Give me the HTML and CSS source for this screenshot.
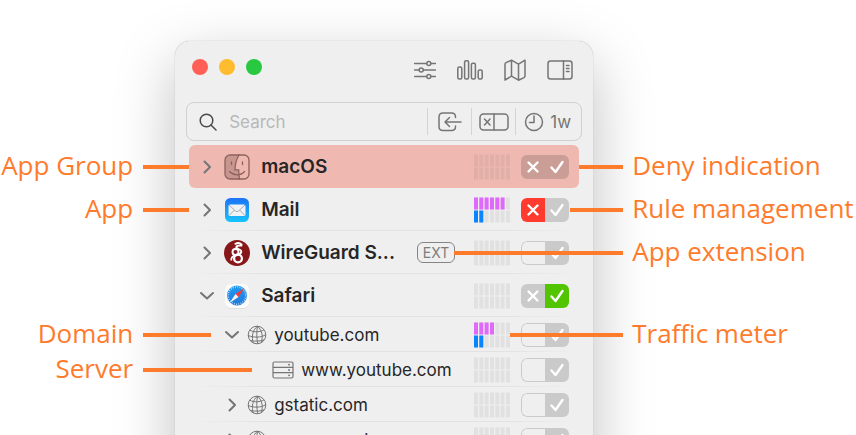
FILE: index.html
```html
<!DOCTYPE html>
<html lang="en">
<head>
    <meta charset="UTF-8">
    <meta name="viewport" content="width=device-width, initial-scale=1.0">
    <title>Network Monitor</title>
    <link rel="stylesheet" href="styles.css">
</head>
<body>
    <!-- Shared icons -->
    <svg class="sprite" aria-hidden="true">
        <symbol id="right" viewBox="0 0 16 16"><path d="M5.500 2.500l5.500 5.500-5.500 5.500"/></symbol>
        <symbol id="down" viewBox="0 0 16 16"><path d="M2 5l6 5.500L14 5"/></symbol>
        <symbol id="cross" viewBox="0 0 24 24"><path d="M7.500 7.500l9 9M16.500 7.500l-9 9"/></symbol>
        <symbol id="check" viewBox="0 0 24 24"><path d="M6.500 12.500l4 4.500L17.500 7"/></symbol>
        <symbol id="globe" viewBox="0 0 20 20">
            <circle cx="10" cy="10" r="8.800"/>
            <path d="M10.500 1.200C5.500 5 4.300 12 6.300 18M10.500 1.200c-1 5-1 12 .3 17.500M10.500 1.200c4.700 4 6 11 3.500 16.300M2.700 5.200c4.500 2.300 10.500 2 14.300-.4M1.200 10.500c5.500 2.300 12.500 2.300 17.500-.8M3.300 15.500c4.200 1 9.700.8 13.700-.6"/>
        </symbol>
        <symbol id="meter" viewBox="0 0 36 26">
            <path d="M2 .5v12M7.300 .5v12M12.600 .5v12M18 .5v12M23.300 .5v12M28.600 .5v12M34 .5v12M2 13.500v12M7.300 13.500v12M12.600 13.500v12M18 13.500v12M23.300 13.500v12M28.600 13.500v12M34 13.500v12"/>
        </symbol>
    </svg>

    <main class="stage">
        <section class="window">
            <header class="toolbar">
                <button class="light red" aria-label="Close"></button>
                <button class="light yellow" aria-label="Minimize"></button>
                <button class="light green" aria-label="Zoom"></button>
                <div class="tools">
                    <button class="tool" aria-label="Filters">
                        <svg viewBox="0 0 22 22"><path d="M.5 4.500h12M17 4.500h4.500M.5 11H5M9.500 11h12M.5 17.500h12M17 17.500h4.500"/><circle cx="14.800" cy="4.500" r="2"/><circle cx="7.200" cy="11" r="2"/><circle cx="14.800" cy="17.500" r="2"/></svg>
                    </button>
                    <button class="tool" aria-label="Statistics">
                        <svg class="wide" viewBox="0 0 26 22"><rect x=".8" y="8" width="4" height="12" rx="1.500"/><rect x="7.600" y="1.800" width="4" height="18.200" rx="1.500"/><rect x="14.400" y="4.300" width="4" height="15.700" rx="1.500"/><rect x="21.200" y="11" width="4" height="9" rx="1.500"/></svg>
                    </button>
                    <button class="tool" aria-label="Map">
                        <svg viewBox="0 0 22 22"><path d="M1 5.200q0-1 1-1.600l5.500-2.400v16L1 21zM7.500 1.200l7 4v16l-7-4M14.500 5.200l6.500-4V17q0 1-1 1.600l-5.500 2.600"/></svg>
                    </button>
                    <button class="tool" aria-label="Sidebar">
                        <svg class="wide" viewBox="0 0 26 22"><rect x="1" y="2" width="24" height="18" rx="2.500"/><path d="M16.500 2v18M19.500 6.500h2.500M19.500 9.500h2.500M19.500 12.500h2.500"/></svg>
                    </button>
                </div>
            </header>

            <div class="search">
                <svg class="lens" viewBox="0 0 18 18"><circle cx="7.500" cy="7.500" r="6.300"/><path d="M12 12l5 5"/></svg>
                <input type="text" placeholder="Search" aria-label="Search">
                <button class="filter" aria-label="Incoming">
                    <svg class="icon-in" viewBox="0 0 24 20"><path d="M17.500 5.500V5c0-2.500-1.500-4-4-4H5C2.500 1 1 2.500 1 5v9.500c0 2.500 1.500 4 4 4h8.500c2.500 0 4-1.500 4-4V14M23 10H7M11.500 5.500L7 10l4.500 4.500"/></svg>
                </button>
                <button class="filter" aria-label="Denied">
                    <svg class="icon-deny" viewBox="0 0 30 18"><rect x="1" y="1" width="28" height="16" rx="3.500"/><path d="M15 1v16M5.500 6l5.500 6M11 6l-5.500 6"/></svg>
                </button>
                <button class="filter period">
                    <svg class="icon-clock" viewBox="0 0 20 20"><circle cx="10" cy="10" r="8.500"/><path d="M10 4v6.500H5.500"/></svg>1w
                </button>
            </div>

            <ul class="list">
                <li class="row denied">
                    <button class="arrow" aria-label="Expand"><svg><use href="#right"/></svg></button>
                    <svg class="app-icon" viewBox="0 0 26 26">
                        <path d="M15 1H6a5 5 0 0 0-5 5v14a5 5 0 0 0 5 5h9.500c-.6-3-.8-5-.8-8H11c0-6 1-11 4-16z" fill="#c9958f"/>
                        <rect x="1" y="1" width="24" height="24" rx="5" fill="none" stroke="#8d625e" stroke-width="1.300"/>
                        <path d="M15 1c-3 5-4 10-4 15h3.700c0 4 .2 6 .8 9M7.500 8v2.500M18.500 8v2.500M5.500 17.500c4.500 4.500 11 4.500 15 0" fill="none" stroke="#8d625e" stroke-width="1.300" stroke-linecap="round"/>
                    </svg>
                    <span class="name">macOS</span>
                    <svg class="meter"><use href="#meter"/></svg>
                    <div class="rule"><button aria-label="Deny"><svg><use href="#cross"/></svg></button><button aria-label="Allow"><svg><use href="#check"/></svg></button></div>
                    <span class="callout before">App Group</span>
                    <span class="callout after">Deny indication</span>
                </li>
                <li class="row">
                    <button class="arrow" aria-label="Expand"><svg><use href="#right"/></svg></button>
                    <svg class="app-icon" viewBox="0 0 26 26">
                        <defs><linearGradient id="mail" x2="0" y2="1"><stop stop-color="#1d72f6"/><stop offset="1" stop-color="#17c5fb"/></linearGradient></defs>
                        <rect x="1" y="1" width="24" height="24" rx="5.500" fill="url(#mail)"/>
                        <rect x="4.500" y="7.500" width="17" height="11.500" rx="1.500" fill="#f0f2f4"/>
                        <path d="M5 8l6.500 6q1.500 1.300 3 0L21 8M5 18.500l5.500-5.500M21 18.500L15.500 13" fill="none" stroke="#98a3ac" stroke-width=".9"/>
                    </svg>
                    <span class="name">Mail</span>
                    <svg class="meter" viewBox="0 0 36 26"><use href="#meter" width="36" height="26"/><path class="out" d="M2 .5v12M7.300 .5v12M12.600 .5v12M18 .5v12M23.300 .5v12M28.600 .5v12"/><path class="in" d="M2 13.500v12M7.300 13.500v12"/></svg>
                    <div class="rule"><button class="deny" aria-label="Deny"><svg><use href="#cross"/></svg></button><button aria-label="Allow"><svg><use href="#check"/></svg></button></div>
                    <span class="callout before">App</span>
                    <span class="callout after to-rule">Rule management</span>
                </li>
                <li class="row">
                    <button class="arrow" aria-label="Expand"><svg><use href="#right"/></svg></button>
                    <svg class="app-icon" viewBox="0 0 26 26">
                        <circle cx="13" cy="13" r="13" fill="#88171a"/>
                        <path d="M11.500 3.800c2.500-1.300 4.500-.8 6 .7M17.500 5.500c-2.500.2-5-.3-5.200 1.700s5 1.800 5 4.300-2.500 3-5 3.800" fill="none" stroke="#fff" stroke-width="2" stroke-linecap="round"/>
                        <circle cx="11.500" cy="12" r="3" fill="none" stroke="#fff" stroke-width="1.900"/>
                        <circle cx="14" cy="18.500" r="3.900" fill="none" stroke="#fff" stroke-width="2.300"/>
                        <path d="M7.200 20.500c-.2-3 1.500-4.500 4-5.500" fill="none" stroke="#fff" stroke-width="1.800"/>
                    </svg>
                    <span class="name">WireGuard S...</span>
                    <span class="ext">EXT</span>
                    <svg class="meter"><use href="#meter"/></svg>
                    <div class="rule"><button class="off" aria-label="Deny"></button><button aria-label="Allow"><svg><use href="#check"/></svg></button></div>
                    <span class="callout after to-ext">App extension</span>
                </li>
                <li class="row">
                    <button class="arrow" aria-label="Collapse"><svg><use href="#down"/></svg></button>
                    <svg class="app-icon" viewBox="0 0 26 26">
                        <defs><linearGradient id="safari" x2="0" y2="1"><stop stop-color="#1f9cf4"/><stop offset="1" stop-color="#2278d8"/></linearGradient></defs>
                        <rect x="1" y="1.500" width="24" height="24" rx="5.500" fill="#cfcfcf"/>
                        <rect x="1" y="1" width="24" height="24" rx="5.500" fill="#fbfbfb"/>
                        <circle cx="13" cy="12.500" r="10" fill="url(#safari)"/>
                        <circle cx="13" cy="12.500" r="8.700" fill="none" stroke="#d6ebff" stroke-width="1.500" stroke-dasharray=".8 1.480"/>
                        <path d="M20.500 5l-6 9-3-3z" fill="#f23b36"/>
                        <path d="M5.500 20l6-9 3 3z" fill="#f4f4f4"/>
                    </svg>
                    <span class="name">Safari</span>
                    <svg class="meter"><use href="#meter"/></svg>
                    <div class="rule"><button aria-label="Deny"><svg><use href="#cross"/></svg></button><button class="allow" aria-label="Allow"><svg><use href="#check"/></svg></button></div>
                </li>
                <li class="row domain">
                    <button class="arrow" aria-label="Collapse"><svg><use href="#down"/></svg></button>
                    <svg class="globe"><use href="#globe"/></svg>
                    <span class="name">youtube.com</span>
                    <svg class="meter" viewBox="0 0 36 26"><use href="#meter" width="36" height="26"/><path class="out" d="M2 .5v12M7.300 .5v12M12.600 .5v12M18 .5v12"/><path class="in" d="M2 13.500v12M7.300 13.500v12"/></svg>
                    <div class="rule"><button class="off" aria-label="Deny"></button><button aria-label="Allow"><svg><use href="#check"/></svg></button></div>
                    <span class="callout before to-domain">Domain</span>
                    <span class="callout after to-meter">Traffic meter</span>
                </li>
                <li class="row server">
                    <svg class="server-icon" viewBox="0 0 22 18"><rect x="1" y="1" width="20" height="16" rx="1.500"/><path d="M1 6.300h20M1 11.600h20"/><path class="dots" d="M17 3.700h.1M17 9h.1M17 14.300h.1"/></svg>
                    <span class="name">www.youtube.com</span>
                    <svg class="meter"><use href="#meter"/></svg>
                    <div class="rule"><button class="off" aria-label="Deny"></button><button aria-label="Allow"><svg><use href="#check"/></svg></button></div>
                    <span class="callout before to-server">Server</span>
                </li>
                <li class="row domain">
                    <button class="arrow" aria-label="Expand"><svg><use href="#right"/></svg></button>
                    <svg class="globe"><use href="#globe"/></svg>
                    <span class="name">gstatic.com</span>
                    <svg class="meter"><use href="#meter"/></svg>
                    <div class="rule"><button class="off" aria-label="Deny"></button><button aria-label="Allow"><svg><use href="#check"/></svg></button></div>
                </li>
                <li class="row domain">
                    <button class="arrow" aria-label="Expand"><svg><use href="#right"/></svg></button>
                    <svg class="globe"><use href="#globe"/></svg>
                    <span class="name">maps.google.com</span>
                    <svg class="meter"><use href="#meter"/></svg>
                    <div class="rule"><button class="off" aria-label="Deny"></button><button aria-label="Allow"><svg><use href="#check"/></svg></button></div>
                </li>
            </ul>
        </section>
    </main>
</body>
</html>
```
FILE: styles.css
```css
* {
    margin: 0;
    padding: 0;
    box-sizing: border-box;
}

body {
    height: 100vh;
    overflow: hidden;
    background: #fff;
    font-family: Inter, sans-serif;
    color: #262626;
}

button {
    background: none;
    border: none;
    font: inherit;
    color: inherit;
}

svg {
    display: block;
    flex: none;
}

.sprite {
    position: absolute;
    width: 0;
    height: 0;
}

.stage {
    display: grid;
    grid-template-columns: 2fr minmax(0, 418px) 3fr;
    padding-top: 41px;
}

.window {
    grid-column: 2;
    min-height: 480px;
    padding: 0 11px;
    background: #efefef;
    border-radius: 15px;
    box-shadow: 0 0 1px rgba(0,0,0,0.35), 0 20px 60px rgba(0,0,0,0.25);
}

/* Toolbar */
.toolbar {
    display: flex;
    align-items: flex-start;
    gap: 11px;
    height: 61px;
    padding: 18px 9px 0 6px;
}

.light {
    width: 16px;
    height: 16px;
    border-radius: 50%;
}

.red { background: #ff5f57; }
.yellow { background: #febc2e; }
.green { background: #28c840; }

.tools {
    display: flex;
    gap: 21px;
    margin-left: auto;
}

.tool svg {
    width: 22px;
    height: 22px;
    fill: none;
    stroke: #757575;
    stroke-width: 1.5;
    stroke-linecap: round;
    stroke-linejoin: round;
}

.tool .wide {
    width: 26px;
}

/* Search field */
.search {
    display: flex;
    align-items: center;
    height: 39px;
    padding-left: 12px;
    border: 1px solid #d0d0d0;
    border-radius: 8px;
}

.search svg {
    fill: none;
    stroke: #757575;
    stroke-width: 1.5;
    stroke-linecap: round;
    stroke-linejoin: round;
}

.search .lens {
    width: 18px;
    height: 18px;
    stroke: #4a4a4a;
}

.search input {
    flex: 1;
    min-width: 0;
    margin-left: 12px;
    border: none;
    outline: none;
    background: none;
    font: 17px Inter, sans-serif;
}

.search input::placeholder {
    color: #b8b8b8;
}

.filter {
    display: flex;
    align-items: center;
    justify-content: center;
    width: 44px;
    height: 27px;
    border-left: 1px solid #d4d4d4;
}

.period {
    gap: 6px;
    width: 66px;
    padding-right: 2px;
    font-size: 17px;
    color: #757575;
}

.icon-in {
    width: 24px;
    height: 20px;
}

.icon-deny {
    width: 30px;
    height: 18px;
}

.icon-clock {
    width: 20px;
    height: 20px;
}

/* List */
.list {
    margin: 4px 3px 0;
    list-style: none;
}

.row {
    position: relative;
    display: flex;
    align-items: center;
    height: 43px;
    padding: 0 10px;
    background: linear-gradient(90deg, transparent, #e2e2e2 20%, #e2e2e2 80%, transparent) bottom / 100% 1px no-repeat;
}

.denied {
    background: #efb9b2;
    border-radius: 6px;
}

.arrow svg {
    width: 16px;
    height: 16px;
    fill: none;
    stroke: #757575;
    stroke-width: 2;
    stroke-linecap: round;
    stroke-linejoin: round;
}

.app-icon {
    width: 26px;
    height: 26px;
    margin: 0 11px 0 9px;
}

.name {
    flex: 1;
    font-size: 19px;
    font-weight: 600;
    white-space: nowrap;
}

.ext {
    margin-right: 19px;
    padding: 0 5px;
    border: 1px solid #858585;
    border-radius: 6px;
    font-size: 14px;
    line-height: 19px;
    color: #7d7d7d;
}

.meter {
    width: 36px;
    height: 26px;
    margin-right: 11px;
    fill: none;
    stroke: #e1e1e1;
    stroke-width: 4;
}

.denied .meter {
    stroke: #e2aea8;
}

.meter .out { stroke: #e069fb; }
.meter .in { stroke: #0a84ff; }

.rule {
    display: flex;
    width: 48px;
    height: 24px;
    border-radius: 6px;
    overflow: hidden;
}

.rule button {
    width: 24px;
    height: 24px;
    background: #cacaca;
}

.rule svg {
    width: 24px;
    height: 24px;
    fill: none;
    stroke: #fff;
    stroke-width: 2.4;
    stroke-linecap: round;
    stroke-linejoin: round;
}

.denied .rule button { background: #cb9d97; }
.rule .deny { background: #ff3b30; }
.rule .allow { background: #52c400; }

.rule .off {
    background: #efefef;
    border: 1px solid #cacaca;
    border-right: none;
    border-radius: 6px 0 0 6px;
}

/* Nested rows */
.domain,
.server {
    height: 35px;
}

.domain {
    padding-left: 35px;
}

.server {
    padding-left: 83px;
}

.domain .name,
.server .name {
    font-size: 17px;
    font-weight: 400;
}

.globe {
    width: 20px;
    height: 20px;
    margin: 0 7px;
    fill: none;
    stroke: #757575;
}

.server-icon {
    width: 22px;
    height: 18px;
    margin-right: 7px;
    fill: none;
    stroke: #757575;
    stroke-width: 1.2;
}

.dots {
    stroke-width: 1.8;
    stroke-linecap: round;
}

/* Callouts */
.callout {
    position: absolute;
    bottom: 50%;
    z-index: 1;
    margin-bottom: -16px;
    font: 26px/36px "Open Sans", sans-serif;
    color: #ff7b2c;
    white-space: nowrap;
}

.callout::after {
    content: "";
    position: absolute;
    bottom: 14px;
    width: 46px;
    height: 4px;
    background: #ff7b2c;
}

.before {
    right: calc(100% + 56px);
}

.before::after {
    left: calc(100% + 10px);
}

.after {
    left: calc(100% + 53px);
}

.after::after {
    right: calc(100% + 9px);
    width: 44px;
}

.to-domain::after { width: 68px; }
.to-server::after { width: 109px; }
.to-rule::after { width: 53px; }
.to-ext::after { width: 169px; }
.to-meter::after { width: 113px; }
```
